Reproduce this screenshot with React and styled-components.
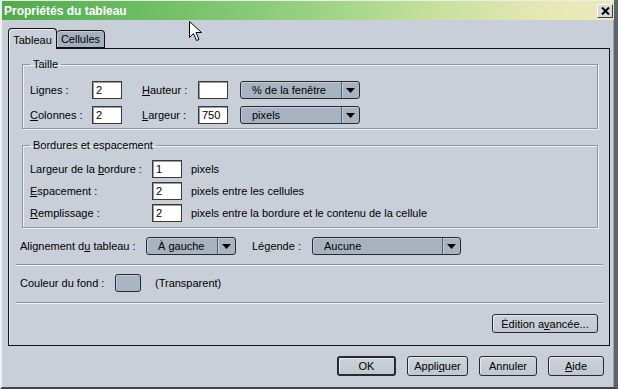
import React from 'react';
import styled, { createGlobalStyle } from 'styled-components';

const GlobalStyle = createGlobalStyle`
  html, body {
    margin: 0;
    padding: 0;
    background: #c8cfd8;
  }
  * {
    box-sizing: border-box;
  }
`;

const Window = styled.div`
  position: relative;
  width: 618px;
  height: 389px;
  background: #c8cfd8;
  border-left: 2px solid #eef1f4;
  border-right: 4px solid #5c636b;
  border-bottom: 2px solid #3e444a;
  box-shadow: inset -1px 0 0 #9aa3ad;
  font-family: "Liberation Sans", Arial, sans-serif;
  font-size: 11px;
  color: #000;
  display: flex;
  flex-direction: column;
  overflow: hidden;
`;

const TitleBar = styled.div`
  height: 20px;
  margin-left: -2px;
  margin-right: -4px;
  padding: 0 5px 0 4px;
  display: flex;
  align-items: center;
  justify-content: space-between;
  background: linear-gradient(to right, #4dab4d 0%, #6fbf66 25%, #93d07f 48%, #c6e09c 70%, #e6e8b4 88%, #f0e8bc 100%);
  border-top: 1px solid #e9efe4;
`;

const Title = styled.span`
  color: #ffffff;
  font-weight: bold;
  font-size: 12px;
`;

const CloseButton = styled.div`
  width: 16px;
  height: 14px;
  background: #d6d9dc;
  border: 1px solid;
  border-color: #ffffff #404040 #404040 #ffffff;
  display: flex;
  align-items: center;
  justify-content: center;
`;

const TabStrip = styled.div`
  display: flex;
  align-items: flex-end;
  margin: 8px 0 0 6px;
  height: 20px;
  position: relative;
  z-index: 1;
`;

const Tab = styled.div`
  width: ${p => p.$w}px;
  height: ${p => (p.$active ? 21 : 18)}px;
  margin-bottom: ${p => (p.$active ? -1 : 0)}px;
  background: ${p => (p.$active ? '#c8cfd8' : '#a4b0bd')};
  border: 1px solid #111;
  border-bottom: ${p => (p.$active ? 'none' : '1px solid #111')};
  border-left: ${p => (p.$active ? '1px solid #111' : 'none')};
  border-radius: 4px 4px 0 0;
  box-shadow: ${p => (p.$active ? 'inset 1px 1px 0 #eef1f4' : 'inset 1px 1px 0 #c3ccd5')};
  display: flex;
  align-items: center;
  justify-content: center;
  padding-top: ${p => (p.$active ? 1 : 0)}px;
  font-size: 11px;
`;

const Panel = styled.div`
  width: 602px;
  height: 298px;
  margin-left: 6px;
  border: 1px solid #111;
  box-shadow: inset 1px 0 0 #e4e8ed;
  padding: 9px 6px 0 7px;
  display: flex;
  flex-direction: column;
`;

const Group = styled.fieldset`
  margin: ${p => p.$top}px 5px 0 6px;
  padding: 0 7px ${p => p.$bottom}px 7px;
  border: 1px solid #8c96a2;
  box-shadow: inset 1px 1px 0 #eef1f5, 1px 1px 0 #eef1f5;
  min-width: 0;
`;

const Legend = styled.legend`
  margin-left: 0;
  padding: 0 3px;
  line-height: 13px;
  font-size: 11px;
`;

const SizeGrid = styled.div`
  margin-top: 10px;
  display: grid;
  grid-template-columns: 62px 50px 56px 42px 120px;
  grid-auto-rows: 18px;
  row-gap: 7px;
  align-items: center;
`;

const SpacingGrid = styled.div`
  margin-top: 8px;
  display: grid;
  grid-template-columns: 122px 39px auto;
  grid-auto-rows: 18px;
  row-gap: 4px;
  align-items: center;
`;

const Label = styled.span`
  white-space: nowrap;
`;

const U = styled.span`
  text-decoration: underline;
`;

const TextInput = styled.div`
  width: ${p => p.$w || 30}px;
  height: 18px;
  background: #ffffff;
  border: 1px solid #3a3a3a;
  box-shadow: inset 1px 1px 0 #9a9a9a;
  padding: 2px 0 0 3px;
  line-height: 13px;
  font-size: 11px;
`;

const SelectBox = styled.div`
  width: ${p => p.$w}px;
  height: 18px;
  border: 1px solid #2a2a2a;
  border-radius: 3px;
  background: #a7b3c0;
  box-shadow: inset 1px 1px 0 #c4cdd7;
  display: flex;
  font-size: 11px;
`;

const SelectValue = styled.div`
  flex: 1;
  padding-left: 11px;
  line-height: 16px;
  white-space: nowrap;
  overflow: hidden;
`;

const SelectArrow = styled.div`
  width: 18px;
  border-left: 1px solid #56606b;
  box-shadow: inset 1px 0 0 #c4cdd7;
  display: flex;
  align-items: center;
  justify-content: center;
`;

const Row = styled.div`
  display: flex;
  align-items: center;
  height: 18px;
  margin-top: ${p => p.$top}px;
  padding-left: 4px;
`;

const Separator = styled.div`
  height: 2px;
  margin-top: ${p => p.$top}px;
  border-top: 1px solid #8a94a0;
  border-bottom: 1px solid #eef1f5;
`;

const Swatch = styled.div`
  width: 26px;
  height: 18px;
  border: 1px solid #2a2a2a;
  border-radius: 3px;
  background: #a9b5c2;
  box-shadow: inset 1px 1px 0 #c6cfd8;
`;

const Button = styled.div`
  width: ${p => p.$w}px;
  height: ${p => p.$h || 20}px;
  border: ${p => (p.$default ? 2 : 1)}px solid #2a2a2a;
  border-radius: 3px;
  background: linear-gradient(#ccd3db, #bfc7d1);
  box-shadow: inset 1px 1px 0 #e6eaef;
  display: flex;
  align-items: center;
  justify-content: center;
  font-size: 11px;
  white-space: nowrap;
`;

const AdvancedRow = styled.div`
  display: flex;
  justify-content: flex-end;
  margin: 10px 5px 0 0;
`;

const Footer = styled.div`
  display: flex;
  justify-content: flex-end;
  gap: 11px;
  margin-top: 10px;
  padding-right: 10px;
`;

const Cursor = styled.svg`
  position: absolute;
  left: 187px;
  top: 21px;
`;

const Arrow = () => (
  <svg width="9" height="5" viewBox="0 0 9 5">
    <path d="M0 0H9L4.5 5Z" fill="#000" />
  </svg>
);

const Select = ({ w, value }) => (
  <SelectBox $w={w}>
    <SelectValue>{value}</SelectValue>
    <SelectArrow>
      <Arrow />
    </SelectArrow>
  </SelectBox>
);

export default function App() {
  return (
    <>
      <GlobalStyle />
      <Window>
        <TitleBar>
          <Title>Propriétés du tableau</Title>
          <CloseButton>
            <svg width="9" height="8" viewBox="0 0 9 8">
              <path d="M1 0.5L8 7.5M8 0.5L1 7.5" stroke="#000" strokeWidth="2" />
            </svg>
          </CloseButton>
        </TitleBar>

        <TabStrip>
          <Tab $w={49} $active>Tableau</Tab>
          <Tab $w={48}>Cellules</Tab>
        </TabStrip>

        <Panel>
          <Group $top={0} $bottom={4}>
            <Legend>Taille</Legend>
            <SizeGrid>
              <Label>Lignes :</Label>
              <TextInput>2</TextInput>
              <Label><U>H</U>auteur :</Label>
              <TextInput />
              <Select w={120} value="% de la fenêtre" />

              <Label><U>C</U>olonnes :</Label>
              <TextInput>2</TextInput>
              <Label><U>L</U>argeur :</Label>
              <TextInput>750</TextInput>
              <Select w={120} value="pixels" />
            </SizeGrid>
          </Group>

          <Group $top={10} $bottom={5}>
            <Legend>Bordures et espacement</Legend>
            <SpacingGrid>
              <Label>Largeur de la <U>b</U>ordure :</Label>
              <TextInput>1</TextInput>
              <Label>pixels</Label>

              <Label><U>E</U>spacement :</Label>
              <TextInput>2</TextInput>
              <Label>pixels entre les cellules</Label>

              <Label><U>R</U>emplissage :</Label>
              <TextInput>2</TextInput>
              <Label>pixels entre la bordure et le contenu de la cellule</Label>
            </SpacingGrid>
          </Group>

          <Row $top={9}>
            <Label style={{ width: 126 }}>Alignement d<U>u</U> tableau :</Label>
            <Select w={90} value="À gauche" />
            <Label style={{ width: 60, marginLeft: 16 }}>Lé<U>g</U>ende :</Label>
            <Select w={149} value="Aucune" />
          </Row>

          <Separator $top={9} />

          <Row $top={8}>
            <Label style={{ width: 95 }}>Couleur du fond :</Label>
            <Swatch />
            <Label style={{ marginLeft: 14 }}>(Transparent)</Label>
          </Row>

          <Separator $top={10} />

          <AdvancedRow>
            <Button $w={106} $h={19}>Édition a<U>v</U>ancée...</Button>
          </AdvancedRow>
        </Panel>

        <Footer>
          <Button $w={59} $default>OK</Button>
          <Button $w={61}>Appli<U>q</U>uer</Button>
          <Button $w={58}>Annuler</Button>
          <Button $w={56}><U>A</U>ide</Button>
        </Footer>

        <Cursor width="13" height="21" viewBox="0 0 13 21">
          <path
            d="M0.5 0.5V16.5L4.5 12.5L7.5 19.5L10 18.5L7 11.5H12.5Z"
            fill="#ffffff"
            stroke="#000000"
            strokeWidth="1"
            strokeLinejoin="miter"
          />
        </Cursor>
      </Window>
    </>
  );
}
